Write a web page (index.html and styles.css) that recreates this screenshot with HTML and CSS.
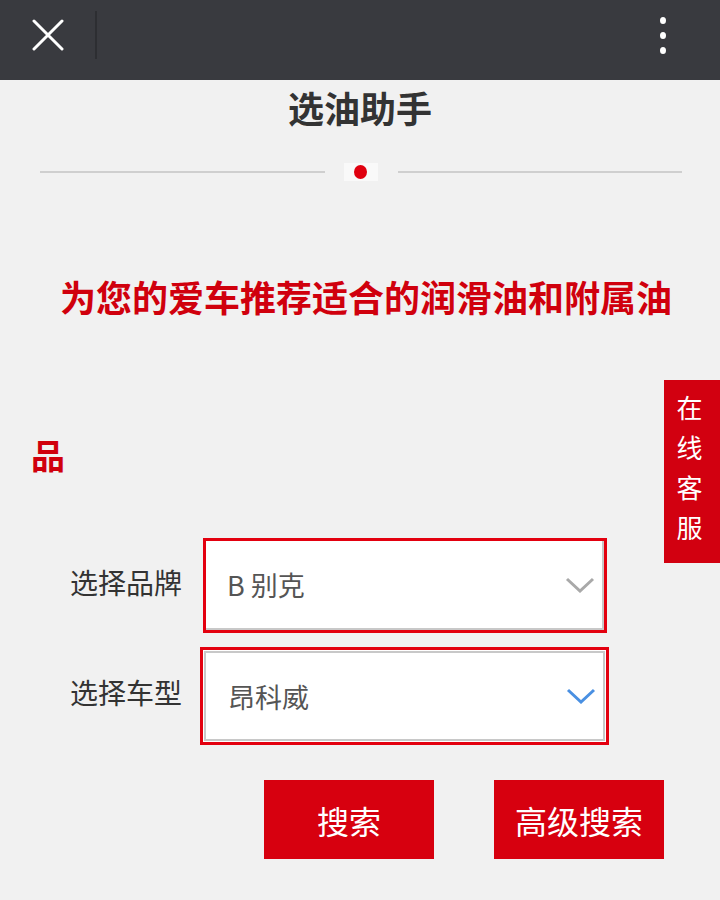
FILE: index.html
```html
<!DOCTYPE html>
<html lang="zh-CN">

<head>
    <meta charset="UTF-8">
    <meta name="viewport" content="width=device-width, initial-scale=1.0">
    <title>选油助手</title>
    <link rel="stylesheet" href="styles.css">
</head>

<body>
    <div class="topbar">
        <div class="close">
            <svg width="32" height="32" viewBox="0 0 32 32">
                <path d="M2 2 L30 30 M30 2 L2 30" stroke="#fff" stroke-width="3" stroke-linecap="round" />
            </svg>
        </div>
        <div class="sep"></div>
        <div class="more">
            <span></span><span></span><span></span>
        </div>
    </div>

    <h1 class="title">选油助手</h1>
    <div class="divider">
        <div class="line"></div>
        <div class="dot-wrap"><div class="dot"></div></div>
        <div class="line"></div>
    </div>

    <p class="slogan">为您的爱车推荐适合的润滑油和附属油</p>

    <h2 class="section">品</h2>

    <div class="form">
        <div class="row">
            <label>选择品牌</label>
            <div class="select-box">
                <div class="select">
                    <span>B 别克</span>
                    <svg class="arrow" width="30" height="16" viewBox="0 0 30 16">
                        <path d="M2 2 L15 14 L28 2" fill="none" stroke="#a9a9a9" stroke-width="3" />
                    </svg>
                </div>
            </div>
        </div>
        <div class="row">
            <label>选择车型</label>
            <div class="select-box focus">
                <div class="select">
                    <span>昂科威</span>
                    <svg class="arrow" width="30" height="16" viewBox="0 0 30 16">
                        <path d="M2 2 L15 14 L28 2" fill="none" stroke="#4a90e2" stroke-width="3" />
                    </svg>
                </div>
            </div>
        </div>
    </div>

    <div class="buttons">
        <button class="btn">搜索</button>
        <button class="btn">高级搜索</button>
    </div>

    <div class="service">在<br>线<br>客<br>服</div>
</body>

</html>
```

FILE: styles.css
```css
body {
    margin: 0;
    background: #f1f1f1;
    font-family: "Noto Sans CJK SC", "Noto Sans", sans-serif;
    color: #333;
}

.topbar {
    height: 80px;
    background: #393a3f;
    display: flex;
    align-items: center;
}

.close {
    width: 32px;
    height: 32px;
    margin-left: 32px;
    margin-top: -10px;
}

.sep {
    width: 2px;
    height: 48px;
    background: #2d2e32;
    margin-left: 31px;
    margin-top: -11px;
}

.more {
    margin-left: auto;
    margin-right: 54px;
    margin-top: -10px;
    display: flex;
    flex-direction: column;
    gap: 8px;
}

.more span {
    display: block;
    width: 6px;
    height: 7px;
    border-radius: 50%;
    background: #fff;
}

.title {
    margin: 0;
    padding-top: 7px;
    text-align: center;
    font-size: 36px;
    line-height: 40px;
    font-weight: bold;
    color: #333;
}

.divider {
    margin: 33px 38px 0 40px;
    height: 24px;
    display: flex;
    align-items: center;
}

.line {
    flex: 1;
    height: 2px;
    background: #cfcfcf;
}

.dot-wrap {
    width: 34px;
    height: 18px;
    margin: 0 20px 0 19px;
    background: rgba(255, 255, 255, 0.6);
    display: flex;
    align-items: center;
    justify-content: center;
}

.dot {
    width: 13px;
    height: 14px;
    border-radius: 50%;
    background: #e0000f;
}

.slogan {
    margin: 92px 0 0;
    padding-left: 12px;
    text-align: center;
    font-size: 36px;
    line-height: 40px;
    font-weight: bold;
    color: #d0000d;
}

.section {
    margin: 119px 0 0;
    padding-left: 31px;
    font-size: 34px;
    line-height: 40px;
    font-weight: bold;
    color: #d0000d;
}

.form {
    margin-top: 63px;
    padding-left: 70px;
}

.row {
    display: flex;
    align-items: center;
    margin-bottom: 14px;
}

.row label {
    width: 133px;
    padding-bottom: 8px;
    font-size: 28px;
    color: #333;
}

.select-box {
    width: 398px;
    height: 89px;
    border: 3px solid #e3000f;
    background: #fff;
}

.select-box.focus {
    width: 403px;
    height: 92px;
    margin-left: -3px;
}

.select {
    height: 100%;
    box-sizing: border-box;
    border-right: 2px solid #c8c8c8;
    border-bottom: 2px solid #c8c8c8;
    display: flex;
    align-items: center;
    padding: 0 7px 0 21px;
    font-size: 27px;
    color: #555;
}

.focus .select {
    border: 2px solid #c8c8c8;
    margin: 1px;
    height: calc(100% - 2px);
    padding-left: 22px;
}

.arrow {
    margin-left: auto;
}

.buttons {
    display: flex;
    justify-content: flex-end;
    gap: 60px;
    margin-top: 35px;
    padding-right: 56px;
}

.btn {
    width: 170px;
    height: 79px;
    border: none;
    background: #d7000f;
    color: #fff;
    font-family: "Noto Sans CJK SC", sans-serif;
    font-size: 32px;
    cursor: pointer;
}

.service {
    position: absolute;
    top: 380px;
    right: 0;
    width: 51px;
    height: 176px;
    padding: 7px 5px 0 0;
    background: #d20010;
    color: #fff;
    text-align: center;
    font-size: 26px;
    line-height: 40px;
}
```
